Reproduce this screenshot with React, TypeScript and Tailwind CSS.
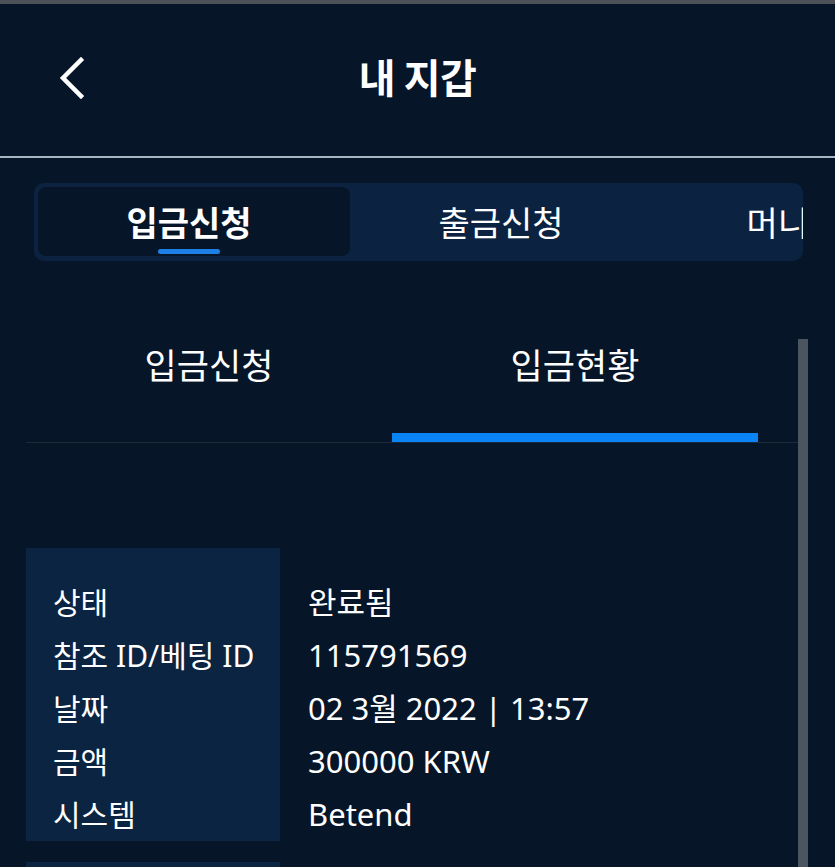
import { useState } from "react"

const rows = [
  { label: "상태", value: "완료됨" },
  { label: "참조 ID/베팅 ID", value: "115791569" },
  { label: "날짜", value: "02 3월 2022 | 13:57" },
  { label: "금액", value: "300000 KRW" },
  { label: "시스템", value: "Betend" },
]

const TopTabs = () => {
  const tabs = ["입금신청", "출금신청", "머니이동"]
  return (
    <div className="mx-[34px] mt-[25px] h-[78px] w-[769px] rounded-[10px] bg-[#0b2340] p-[4px] overflow-hidden">
      <div className="flex h-full">
        {tabs.map((t, i) => (
          <div
            key={t}
            className={
              i === 0
                ? "relative flex h-[69px] w-[312px] shrink-0 items-center justify-center rounded-[8px] bg-[#061628] pr-[10px] text-[34px] font-bold text-white"
                : "flex h-[69px] w-[312px] shrink-0 items-center justify-center pr-[10px] text-[34px] text-white"
            }
          >
            <span className={i === 2 ? "mt-[3px] -ml-[8px]" : "mt-[3px]"}>{t}</span>
            {i === 0 && (
              <span className="absolute left-[120px] bottom-[2px] h-[5px] w-[62px] rounded-full bg-[#1d80e6]" />
            )}
          </div>
        ))}
      </div>
    </div>
  )
}

const DetailCard = () => (
  <div className="flex w-[782px]">
    <div className="w-[254px] shrink-0 bg-[#0b2441] pl-[27px] pt-[28px] text-[30px]">
      {rows.map((r) => (
        <div key={r.label} className="flex h-[53px] items-center">
          {r.label}
        </div>
      ))}
    </div>
    <div className="pl-[28px] pt-[28px] text-[31px]">
      {rows.map((r) => (
        <div key={r.label} className="flex h-[53px] items-center">
          {r.value}
        </div>
      ))}
    </div>
  </div>
)

export default function App() {
  const [sub, setSub] = useState(1)
  return (
    <div className="relative h-[867px] w-[835px] overflow-hidden bg-[#061628] font-['Noto_Sans','Noto_Sans_CJK_KR',sans-serif] text-white">
      <div className="h-[4px] bg-[#4c5258]" />
      {/* header */}
      <header className="relative flex h-[152px] items-center justify-center">
        <button className="absolute left-[55px] top-[50px] p-[2px]">
          <svg width="28" height="44" viewBox="0 0 28 44" fill="none">
            <polyline points="24,4 6,22 24,40" stroke="white" strokeWidth="4.5" strokeLinecap="square" />
          </svg>
        </button>
        <h1 className="-mt-[8px] font-['Noto_Sans_CJK_KR',sans-serif] text-[40px] font-bold tracking-[-0.5px]">내 지갑</h1>
      </header>
      <div className="h-[2px] bg-[#a9b6c2]" />

      <TopTabs />

      <div className="relative mt-[78px] ml-[26px] w-[782px]">
        {/* scrollbar */}
        <div className="absolute right-0 top-0 h-[600px] w-[10px] bg-[#4a5560]" />

        <div className="flex w-[732px]">
          {["입금신청", "입금현황"].map((t, i) => (
            <button
              key={t}
              onClick={() => setSub(i)}
              className="flex h-[103px] w-[366px] flex-col items-center justify-between"
            >
              <span className="mt-[2px] text-[35px] leading-[50px]">{t}</span>
              <span className={sub === i ? "h-[9px] w-full bg-[#0a84f5]" : "h-[9px] w-full"} />
            </button>
          ))}
        </div>
        <div className="h-[1px] w-[782px] bg-[#1d2a39]" />

        <div className="mt-[105px] flex flex-col gap-[21px]">
          <DetailCard />
          <DetailCard />
        </div>
      </div>
    </div>
  )
}
